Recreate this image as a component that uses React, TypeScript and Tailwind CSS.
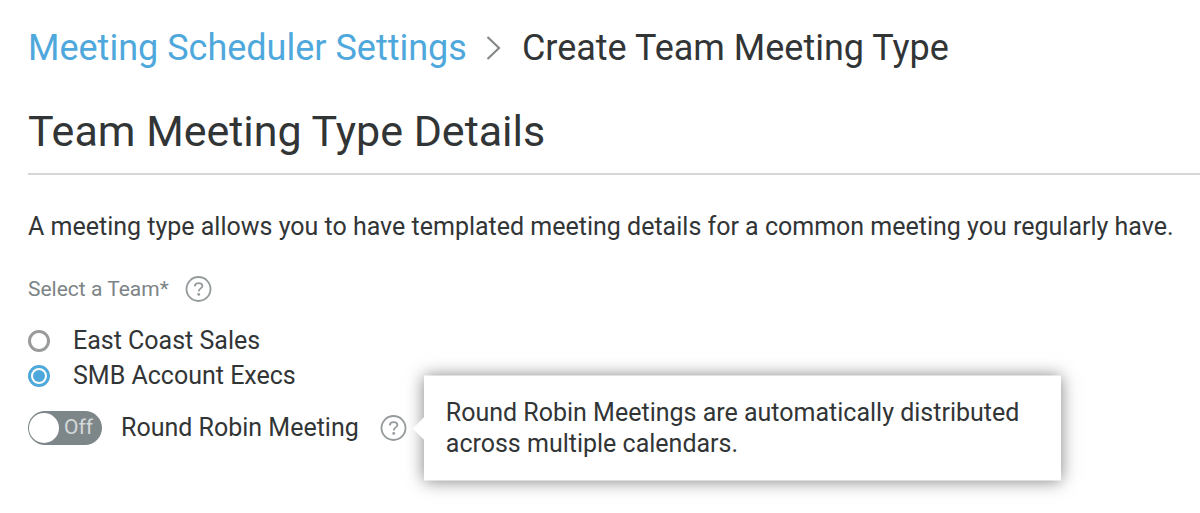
import { useState } from "react";

function ChevronIcon() {
  return (
    <svg width="16" height="26" viewBox="0 0 16 26" fill="none" stroke="#85898b" strokeWidth="2.2" aria-hidden="true">
      <path d="M1.5 2 L13 13 L1.5 24" />
    </svg>
  );
}

function HelpButton({ label }: { label: string }) {
  return (
    <button type="button" aria-label={label} className="block text-[#959a9c]">
      <svg width="28" height="28" viewBox="0 0 28 28" fill="none" stroke="currentColor" aria-hidden="true">
        <circle cx="13.5" cy="14" r="12" strokeWidth="1.8" />
        <path d="M9.8 11.4 C10 9.2 11.5 8.1 13.6 8.1 C15.9 8.1 17.4 9.3 17.4 11 C17.4 13.5 13.7 13.3 13.7 16.4" strokeWidth="1.8" />
        <circle cx="13.7" cy="19.4" r="1.4" fill="currentColor" stroke="none" />
      </svg>
    </button>
  );
}

const teams = ["East Coast Sales", "SMB Account Execs"];

export default function App() {
  const [team, setTeam] = useState("SMB Account Execs");
  const [roundRobin, setRoundRobin] = useState(false);

  return (
    <main className="min-h-screen bg-white pl-7 pt-6 font-['Roboto','Liberation_Sans',sans-serif] text-[25px] text-[#323536]">
      <nav className="flex items-center text-[36px] leading-[48px]">
        <a href="#settings" className="text-[#4fa8dc]">Meeting Scheduler Settings</a>
        <span className="ml-[19px] mr-5">
          <ChevronIcon />
        </span>
        <span>Create Team Meeting Type</span>
      </nav>

      <h1 className="mt-[31px] border-b-2 border-[#d5d6d7] pb-[13px] text-[43px] leading-[57px]">Team Meeting Type Details</h1>

      <p className="mt-9 leading-8">A meeting type allows you to have templated meeting details for a common meeting you regularly have.</p>

      <fieldset className="mt-8">
        <legend className="flex items-center gap-4 text-[21px] leading-7 text-[#7d8486]">
          Select a Team*
          <HelpButton label="About teams" />
        </legend>
        <div className="mt-5">
          {teams.map((t) => (
            <label key={t} className="flex h-[35px] items-center gap-[23px]">
              <input
                type="radio" name="team" checked={team === t} onChange={() => setTeam(t)}
                className="size-[22px] appearance-none rounded-full border-[3px] border-[#989a9b] bg-white bg-clip-content p-[2px] checked:border-[#4fa8dc] checked:bg-[#4fa8dc]"
              />
              {t}
            </label>
          ))}
        </div>
      </fieldset>

      <div className="mt-[17px] flex h-9 items-center">
        <label className="flex items-center gap-[19px]">
          <span className="relative flex h-[34px] w-[74px] items-center">
            <input
              type="checkbox" role="switch" checked={roundRobin} onChange={(e) => setRoundRobin(e.target.checked)}
              className="peer absolute inset-0 appearance-none rounded-full bg-[#7d8789] checked:bg-[#4fa8dc]"
            />
            <span className="pointer-events-none absolute left-px size-[30px] rounded-full bg-white peer-checked:left-auto peer-checked:right-px" />
            <span className="pointer-events-none relative pl-9 text-[21px] text-[#d4d8d9] peer-checked:pl-2">{roundRobin ? "On" : "Off"}</span>
          </span>
          Round Robin Meeting
        </label>
        <div className="relative ml-[21px]">
          <HelpButton label="About round robin meetings" />
          <div role="tooltip" className="absolute left-full top-1/2 ml-4 w-[637px] -translate-y-1/2 bg-white px-[22px] pb-[22px] pt-[21px] leading-[31px] shadow-[0_0_16px_rgba(0,0,0,0.5)]">
            <span className="absolute -left-2 top-1/2 size-4 -translate-y-1/2 rotate-45 bg-white" />
            Round Robin Meetings are automatically distributed across multiple calendars.
          </div>
        </div>
      </div>
    </main>
  );
}
